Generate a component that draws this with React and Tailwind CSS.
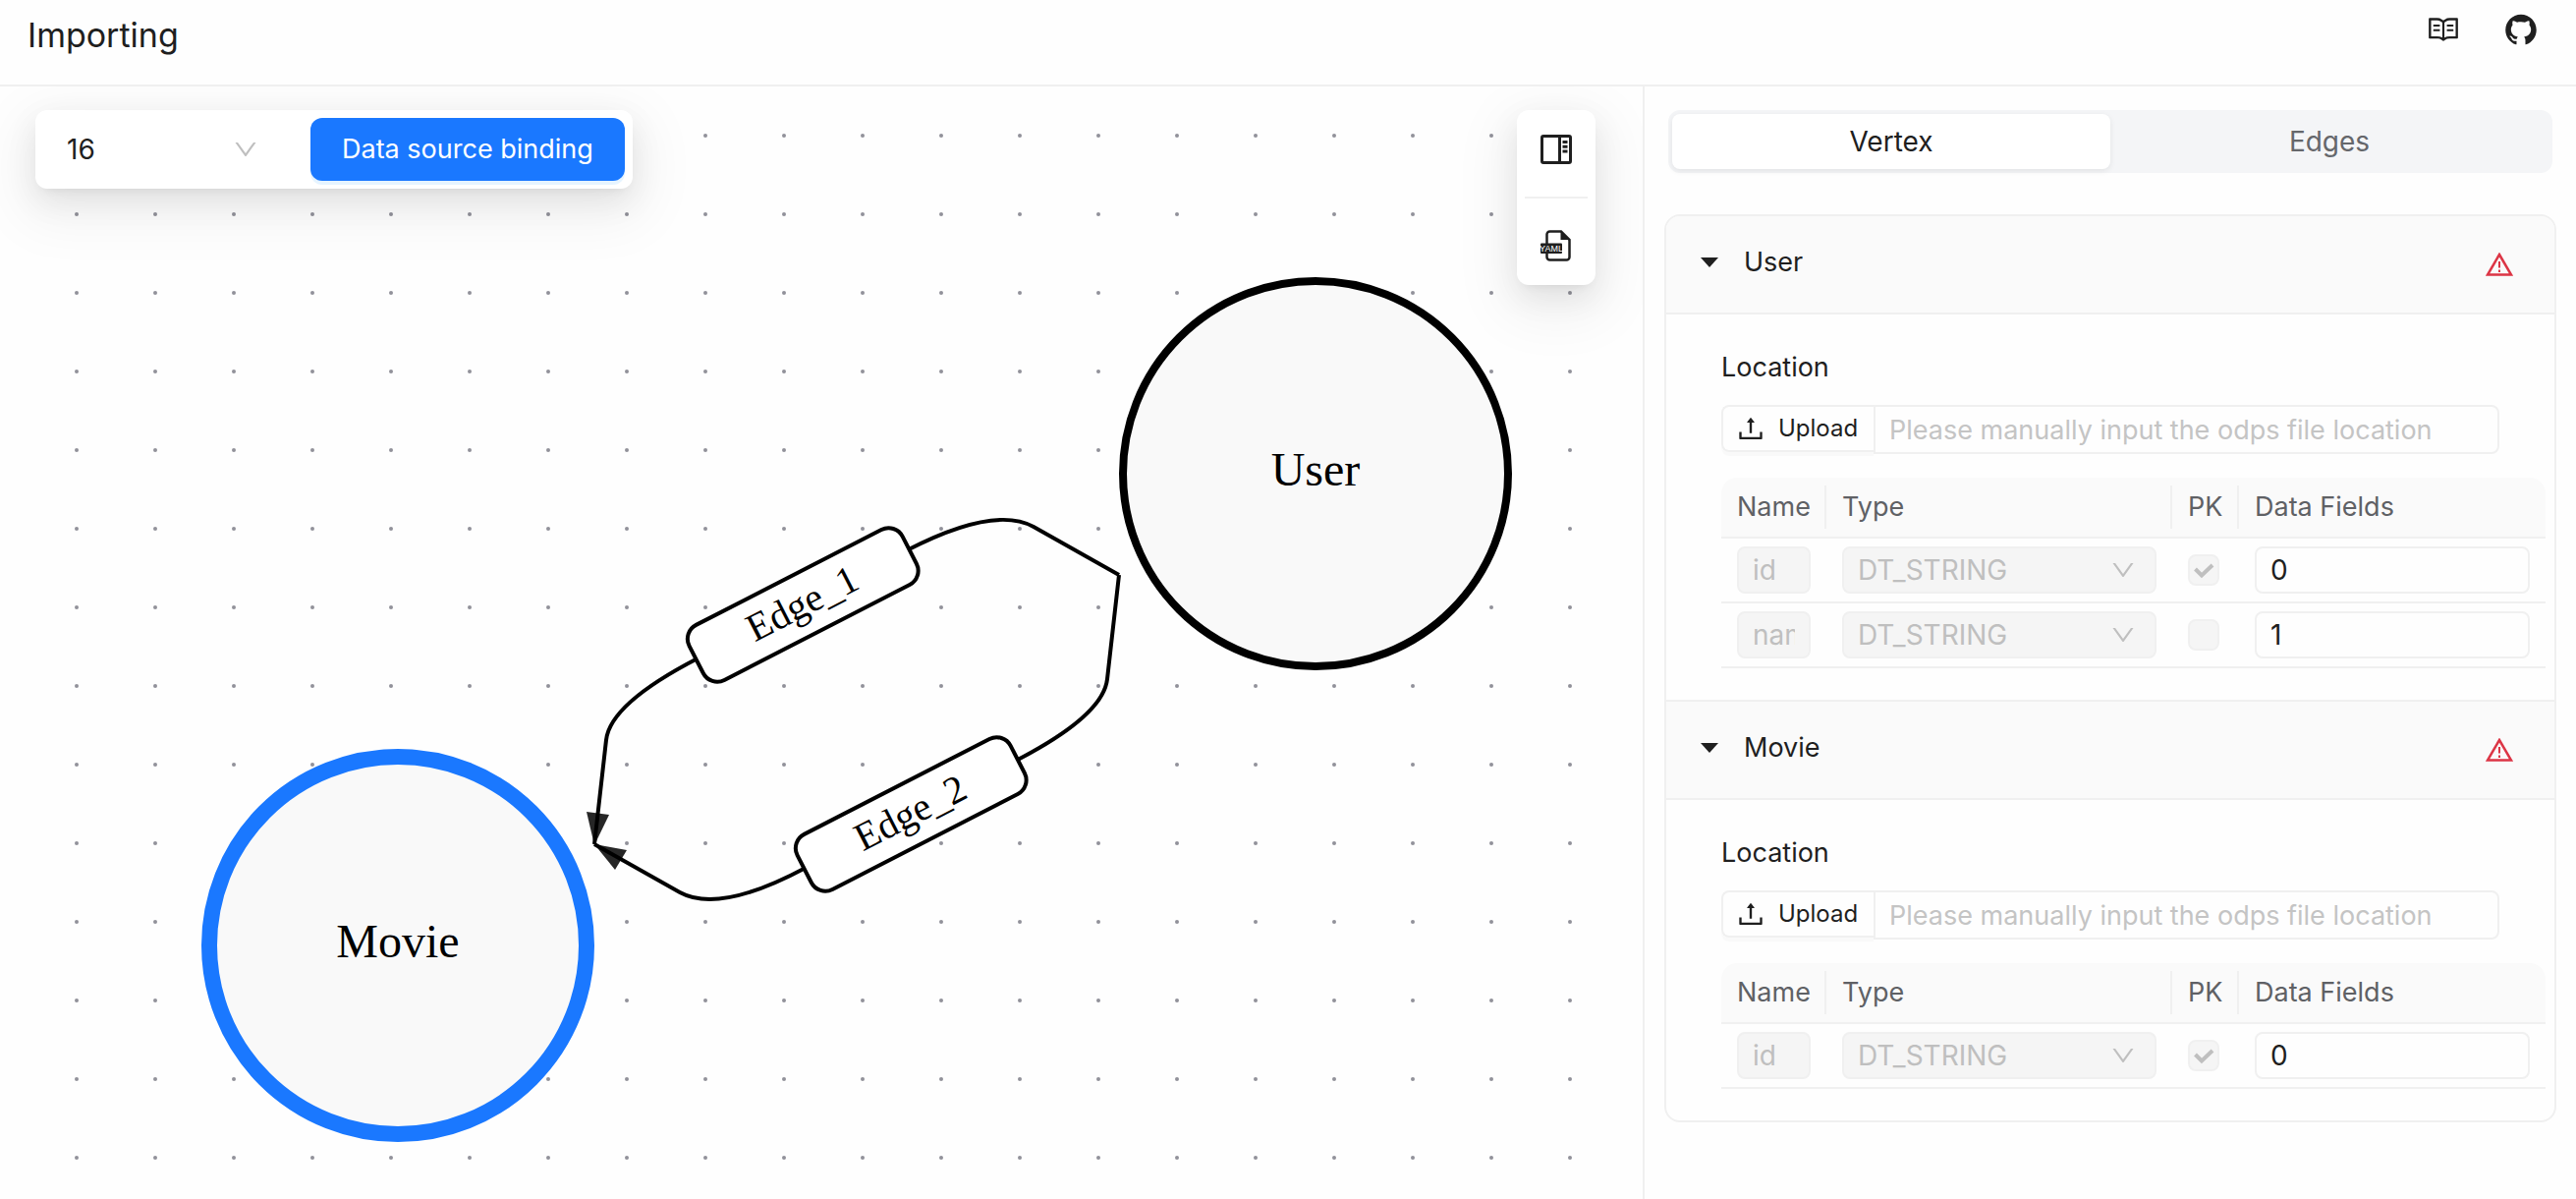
import { AiOutlineRead, AiFillGithub, AiOutlineDown, AiOutlineUpload } from "react-icons/ai";

const vertices = [
  { name: "User", fields: [{ name: "id", pk: true, column: "0" }, { name: "name", pk: false, column: "1" }] },
  { name: "Movie", fields: [{ name: "id", pk: true, column: "0" }] },
];

function Header() {
  return (
    <header className="flex h-[88px] items-start justify-between border-b-2 border-[#f0f0f0] pr-[38px] pl-7">
      <h1 className="text-[34px] leading-[72px]">Importing</h1>
      <nav className="flex h-[60px] items-center gap-11">
        <a href="#docs" aria-label="Documentation"><AiOutlineRead className="size-[34px]" /></a>
        <a href="#github" aria-label="GitHub"><AiFillGithub className="size-9" /></a>
      </nav>
    </header>
  );
}

function PanelIcon() {
  return (
    <svg viewBox="0 0 32 32" className="size-8" fill="none" stroke="currentColor">
      <rect x="1.5" y="2.5" width="29" height="27" rx="1.5" strokeWidth="3" />
      <path d="M19.500 3v26" strokeWidth="3" />
      <path d="M22.500 8.500h5M22.500 13.200h5M22.500 17.900h5" strokeWidth="3" />
    </svg>
  );
}

function YamlIcon() {
  return (
    <svg viewBox="0 0 32 32" className="size-8 overflow-visible" fill="none">
      <path d="M21 1.500H9.500a3 3 0 0 0-3 3V27.500a3 3 0 0 0 3 3H26.500a3 3 0 0 0 3-3V10Z" stroke="currentColor" strokeWidth="2.500" />
      <path d="M20.500 1v9H30.500Z" fill="currentColor" />
      <rect x="0" y="13.500" width="22" height="10.500" rx="1" fill="currentColor" />
      <text x="11" y="22" textAnchor="middle" fill="white" className="font-['Liberation_Sans',sans-serif] text-[9px]">YAML</text>
    </svg>
  );
}

function WarningIcon() {
  return (
    <svg viewBox="0 0 28 24" className="h-6 w-7" fill="none" stroke="#dc3545">
      <path d="M14 2L26 22.500H2Z" strokeWidth="2.500" />
      <path d="M14 9v6.500M14 17.500v2.500" strokeWidth="2" />
    </svg>
  );
}

const SHADOW = "shadow-[0_12px_32px_0_rgba(0,0,0,0.08),0_6px_12px_-8px_rgba(0,0,0,0.12),0_18px_56px_16px_rgba(0,0,0,0.05)]";

function EdgeLabel({ x, y, children }) {
  return (
    <g transform={`translate(${x} ${y}) rotate(-27.2)`}>
      <rect x="-122" y="-31" width="244" height="63" rx="16" fill="white" stroke="black" strokeWidth="4" />
      <text y="12" textAnchor="middle" fill="black" className="font-['Liberation_Serif',serif] text-[40px]">{children}</text>
    </g>
  );
}

function Graph() {
  return (
    <>
      <svg className="absolute top-0 left-0 h-full w-full" aria-label="Edges between User and Movie">
        <defs>
          <pattern id="dots" x="38" y="10" width="80" height="80" patternUnits="userSpaceOnUse">
            <circle cx="40" cy="40" r="2" fill="#91919a" />
          </pattern>
        </defs>
        <rect width="100%" height="100%" fill="url(#dots)" />
        <g transform="translate(0 -88)">
          <g fill="none" stroke="black" strokeWidth="4">
            <path d="M1139 585L1052 536Q1012 514 923 560L710 670Q621 716 617 753L605 859" />
            <path d="M1139 585L1127 691Q1123 728 1034 774L820 883Q732 930 692 908L605 859" />
          </g>
          <path d="M605 860L597 826L620 829Z" fill="black" fillOpacity="0.85" />
          <path d="M605 859L638 865L626 885Z" fill="black" fillOpacity="0.85" />
          <EdgeLabel x="817" y="615">Edge_1</EdgeLabel>
          <EdgeLabel x="927" y="828">Edge_2</EdgeLabel>
        </g>
      </svg>
      <div className="absolute top-[194px] left-[1139px] flex size-[400px] items-center justify-center rounded-full border-8 border-black bg-[#f9f9f9] pb-2 font-['Liberation_Serif',serif] text-5xl text-black">User</div>
      <div className="absolute top-[674px] left-[205px] flex size-[400px] items-center justify-center rounded-full border-16 border-[#1a78ff] bg-[#f9f9f9] pb-2 font-['Liberation_Serif',serif] text-5xl text-black">Movie</div>
    </>
  );
}

function Canvas() {
  return (
    <main className="relative min-w-0 flex-1 overflow-hidden">
      <Graph />
      <div className={`absolute top-6 left-9 flex items-center rounded-xl bg-white p-2 ${SHADOW}`}>
        <div className="relative">
          <select aria-label="Graph" className="h-16 w-[272px] appearance-none pl-6 text-[28px] outline-none">
            <option>16</option>
          </select>
          <AiOutlineDown className="pointer-events-none absolute top-[18px] right-[52px] size-7 text-[#bfbfbf]" />
        </div>
        <button className="h-16 rounded-xl bg-[#1a78ff] px-8 text-white shadow-[0_4px_0_rgba(5,145,255,0.1)]">Data source binding</button>
      </div>
      <div className={`absolute top-6 right-12 flex w-20 flex-col rounded-xl bg-white px-2 ${SHADOW}`}>
        <button aria-label="Toggle panel" className="flex h-[90px] items-center justify-center border-b-2 border-[#f0f0f0] pb-2"><PanelIcon /></button>
        <button aria-label="Export YAML" className="flex h-[88px] items-center justify-center pt-2"><YamlIcon /></button>
      </div>
    </main>
  );
}

function FieldRow({ field, vertex }) {
  const id = `${vertex} ${field.name}`;
  return (
    <tr className="border-b-2 border-[#f0f0f0] text-[28px]">
      <td className="px-4 py-2">
        <input aria-label={`${id} name`} disabled defaultValue={field.name} className="block h-12 w-full rounded-lg border-2 border-[#f0f0f0] bg-[#f5f5f5] px-[14px] text-[#bfbfbf]" />
      </td>
      <td className="px-4 py-2">
        <div className="relative">
          <select aria-label={`${id} type`} disabled className="block h-12 w-full appearance-none rounded-lg border-2 border-[#f0f0f0] bg-[#f5f5f5] px-[14px] text-[#bfbfbf] opacity-100">
            <option>DT_STRING</option>
          </select>
          <AiOutlineDown className="pointer-events-none absolute top-[10px] right-5 size-7 text-[#bfbfbf]" />
        </div>
      </td>
      <td className="px-4 py-2">
        <div className="relative size-8">
          <input type="checkbox" aria-label={`${id} primary key`} disabled defaultChecked={field.pk} className="peer block size-8 appearance-none rounded-lg border-2 border-[#f0f0f0] bg-[#f5f5f5]" />
          <svg viewBox="0 0 32 32" className="pointer-events-none absolute inset-0 hidden size-8 peer-checked:block" fill="none">
            <path d="M7.500 15L14 21.500L25 11" stroke="#bfbfbf" strokeWidth="4" />
          </svg>
        </div>
      </td>
      <td className="px-4 py-2">
        <input aria-label={`${id} data field`} defaultValue={field.column} className="block h-12 w-full rounded-lg border-2 border-[#f0f0f0] px-[14px] outline-none" />
      </td>
    </tr>
  );
}

function VertexPanel({ vertex }) {
  return (
    <section className="border-b-2 border-[#f0f0f0] last:border-b-0">
      <h2 className="border-b-2 border-[#f0f0f0] bg-[#fafafa]">
        <button className="flex h-[98px] w-full items-center justify-between pr-[42px] pl-[35px] text-left">
          <span className="flex items-center gap-[26px] pb-1">
            <svg viewBox="0 0 18 10" className="h-[10px] w-[18px]"><path d="M0 0H18L9 10Z" fill="currentColor" /></svg>
            {vertex.name}
          </span>
          <WarningIcon />
        </button>
      </h2>
      <div className="py-8 pr-[9px] pl-14">
        <label htmlFor={`location-${vertex.name}`} className="block leading-[44px]">Location</label>
        <div className="mt-4 mr-[47px] flex items-start">
          <button className="flex h-12 w-[155px] items-center gap-3 rounded-l-lg border-2 border-r-0 border-[#f0f0f0] pl-3 text-2xl shadow-[0_4px_0_rgba(0,0,0,0.02)]">
            <AiOutlineUpload className="size-8" />
            Upload
          </button>
          <input id={`location-${vertex.name}`} placeholder="Please manually input the odps file location" className="h-[50px] min-w-0 flex-1 rounded-r-lg border-2 border-[#f0f0f0] px-[14px] outline-none placeholder:text-[#c4c4c4]" />
        </div>
        <table className="mt-6 w-full table-fixed border-collapse">
          <colgroup>
            <col className="w-[107px]" />
            <col className="w-[352px]" />
            <col className="w-[68px]" />
            <col />
          </colgroup>
          <thead>
            <tr className="border-b-2 border-[#f0f0f0] text-[#5f6165]">
              {["Name", "Type", "PK", "Data Fields"].map((title) => (
                <th key={title} scope="col" className="group bg-[#fafafa] px-0 py-2 text-left font-normal first:rounded-tl-2xl last:rounded-tr-2xl">
                  <div className="border-r-2 border-[#f0f0f0] pl-4 leading-[44px] group-last:border-r-0">{title}</div>
                </th>
              ))}
            </tr>
          </thead>
          <tbody>
            {vertex.fields.map((field) => <FieldRow key={field.name} field={field} vertex={vertex.name} />)}
          </tbody>
        </table>
      </div>
    </section>
  );
}

function Sidebar() {
  return (
    <aside className="w-[950px] shrink-0 border-l-2 border-[#f0f0f0] px-5 pt-6">
      <div role="tablist" className="mx-1 grid grid-cols-2 rounded-xl bg-[#f4f5f7] p-1 text-[28px]">
        <button role="tab" aria-selected="true" className="h-14 rounded-lg bg-white shadow-[0_2px_6px_rgba(0,0,0,0.08)]">Vertex</button>
        <button role="tab" aria-selected="false" className="h-14 text-[#65676b]">Edges</button>
      </div>
      <div className="mt-[42px] overflow-hidden rounded-2xl border-2 border-[#f0f0f0]">
        {vertices.map((vertex) => <VertexPanel key={vertex.name} vertex={vertex} />)}
      </div>
    </aside>
  );
}

export default function App() {
  return (
    <div className="flex min-h-screen flex-col bg-[#fefefe] font-[Inter,sans-serif] text-[27px] leading-[44px] text-[#1f1f1f]">
      <Header />
      <div className="flex flex-1">
        <Canvas />
        <Sidebar />
      </div>
    </div>
  );
}
